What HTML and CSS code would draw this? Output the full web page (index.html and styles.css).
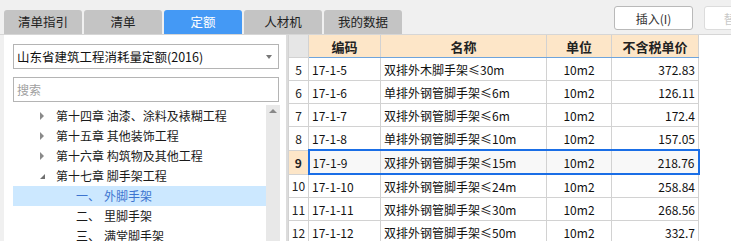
FILE: index.html
```html
<!DOCTYPE html>
<html>
<head>
  <title>定额</title>
  <link rel="stylesheet" href="styles.css">
</head>
<body>
  <div class="topbar">
    <div class="tabs">
      <div class="tab">清单指引</div>
      <div class="tab">清单</div>
      <div class="tab active">定额</div>
      <div class="tab">人材机</div>
      <div class="tab">我的数据</div>
    </div>
    <div class="actions">
      <button class="btn">插入(I)</button>
      <button class="btn disabled">替换(R)</button>
    </div>
  </div>

  <div class="main">
    <div class="left">
      <div class="select">
        <span>山东省建筑工程消耗量定额(2016)</span>
        <span class="caret"></span>
      </div>
      <div class="search">搜索</div>
      <div class="tree-wrap">
        <ul class="tree">
          <li class="node"><span class="arrow"></span>第十四章 油漆、涂料及裱糊工程</li>
          <li class="node"><span class="arrow"></span>第十五章 其他装饰工程</li>
          <li class="node"><span class="arrow"></span>第十六章 构筑物及其他工程</li>
          <li class="node"><span class="arrow open"></span>第十七章 脚手架工程</li>
          <li class="leaf selected"><span class="num">一、</span>外脚手架</li>
          <li class="leaf"><span class="num">二、</span>里脚手架</li>
          <li class="leaf"><span class="num">三、</span>满堂脚手架</li>
        </ul>
        <div class="scrollbar"><span class="up"></span></div>
      </div>
    </div>
    <div class="splitter"></div>
    <div class="right">
      <table class="grid">
        <colgroup>
          <col style="width:20px">
          <col style="width:72px">
          <col style="width:166px">
          <col style="width:65px">
          <col style="width:87px">
        </colgroup>
        <thead>
          <tr>
            <th class="corner"></th>
            <th>编码</th>
            <th>名称</th>
            <th>单位</th>
            <th>不含税单价</th>
          </tr>
        </thead>
        <tbody>
          <tr><td class="rn">5</td><td>17-1-5</td><td>双排外木脚手架≤30m</td><td class="c">10m2</td><td class="r">372.83</td></tr>
          <tr><td class="rn">6</td><td>17-1-6</td><td>单排外钢管脚手架≤6m</td><td class="c">10m2</td><td class="r">126.11</td></tr>
          <tr><td class="rn">7</td><td>17-1-7</td><td>双排外钢管脚手架≤6m</td><td class="c">10m2</td><td class="r">172.4</td></tr>
          <tr><td class="rn">8</td><td>17-1-8</td><td>单排外钢管脚手架≤10m</td><td class="c">10m2</td><td class="r">157.05</td></tr>
          <tr class="current"><td class="rn">9</td><td class="first">17-1-9</td><td>双排外钢管脚手架≤15m</td><td class="c">10m2</td><td class="r last">218.76</td></tr>
          <tr><td class="rn">10</td><td>17-1-10</td><td>双排外钢管脚手架≤24m</td><td class="c">10m2</td><td class="r">258.84</td></tr>
          <tr><td class="rn">11</td><td>17-1-11</td><td>双排外钢管脚手架≤30m</td><td class="c">10m2</td><td class="r">268.56</td></tr>
          <tr><td class="rn">12</td><td>17-1-12</td><td>双排外钢管脚手架≤50m</td><td class="c">10m2</td><td class="r">332.7</td></tr>
        </tbody>
      </table>
    </div>
  </div>
</body>
</html>
```

FILE: styles.css
```css
body, html {
  margin: 0;
  padding: 0;
  height: 100%;
  overflow: hidden;
  background-color: #f0f0f0;
  font-family: "Noto Sans CJK SC", "Liberation Sans", sans-serif;
  font-size: 12px;
  color: #1a1a1a;
}
.topbar {
  display: flex;
  height: 35px;
  border-bottom: 1px solid #d6d6d6;
  box-sizing: border-box;
  overflow: hidden;
}
.tabs {
  display: flex;
  align-self: flex-end;
  gap: 2px;
  padding-left: 4px;
}
.tab {
  width: 78px;
  height: 24px;
  line-height: 24px;
  text-align: center;
  font-size: 12.5px;
  background-color: #c4c4c4;
  color: #222;
  border-radius: 3px 3px 0 0;
}
.tab.active {
  background-color: #4499f5;
  color: #fff;
}
.actions {
  display: flex;
  gap: 11px;
  margin-left: 212px;
  margin-top: 6px;
}
.btn {
  flex-shrink: 0;
  width: 79px;
  height: 24px;
  padding: 0;
  font-family: inherit;
  font-size: 12px;
  color: #333;
  background-color: #fff;
  border: 1px solid #b9b9b9;
  border-radius: 3px;
}
.btn.disabled {
  color: #c8c8c8;
  border-color: #dcdcdc;
}
.main {
  display: flex;
  height: calc(100% - 35px);
}
.left {
  width: 282px;
  margin-left: 4px;
  background-color: #fff;
  padding-top: 9px;
  box-sizing: border-box;
}
.select, .search {
  margin-left: 9px;
  width: 266px;
  height: 25px;
  box-sizing: border-box;
  border: 1px solid #b4b4b4;
  display: flex;
  align-items: center;
  padding-left: 3px;
}
.select {
  justify-content: space-between;
  font-size: 12.5px;
  color: #111;
}
.caret {
  width: 0;
  height: 0;
  margin-right: 6px;
  border-left: 3px solid transparent;
  border-right: 3px solid transparent;
  border-top: 4px solid #777;
}
.search {
  margin-top: 8px;
  color: #a0a0a0;
}
.tree-wrap {
  display: flex;
  margin-top: 3px;
  margin-left: 9px;
}
.tree {
  list-style: none;
  margin: 0;
  padding: 1px 0 0 0;
  width: 253px;
}
.tree li {
  height: 20px;
  line-height: 20px;
  display: flex;
  align-items: center;
  white-space: nowrap;
}
.node {
  padding-left: 27px;
}
.arrow {
  width: 0;
  height: 0;
  margin-right: 12px;
  border-top: 4px solid transparent;
  border-bottom: 4px solid transparent;
  border-left: 4px solid #8a8a8a;
}
.arrow.open {
  border-top: 0;
  border-left: 5px solid transparent;
  border-bottom: 5px solid #707070;
  margin-right: 11px;
}
.leaf {
  padding-left: 63px;
}
.num {
  width: 28px;
}
.leaf.selected {
  background-color: #cce8ff;
  color: #3d74cf;
}
.scrollbar {
  width: 14px;
  height: 200px;
  background-color: #e8e8e8;
  display: flex;
  justify-content: center;
}
.up {
  margin-top: 4px;
  width: 0;
  height: 0;
  border-left: 4px solid transparent;
  border-right: 4px solid transparent;
  border-bottom: 4px solid #888;
}
.splitter {
  width: 2px;
  background-color: #dcdcdc;
}
.right {
  flex: 1;
  background-color: #fff;
}
.grid {
  border-collapse: collapse;
  table-layout: fixed;
  width: 410px;
  color: #111;
}
.grid th, .grid td {
  height: 22px;
  padding: 0 3px;
  border: 1px solid #d2d2d2;
  white-space: nowrap;
  overflow: hidden;
}
.grid th {
  background-color: #fde6c8;
  font-size: 13px;
  font-weight: bold;
  color: #222;
  border-top: 0;
  border-bottom: 1px solid #6ea4dc;
}
.grid th.corner {
  background-color: #e6e6e6;
  border-bottom-color: #d2d2d2;
}
.grid td.rn {
  padding: 0;
  text-align: center;
  color: #222;
}
.grid td.c {
  text-align: center;
}
.grid td.r {
  text-align: right;
}
.current td {
  background-color: #f8f8f8;
  border-top: 2px solid #1a6ee6;
  border-bottom: 2px solid #1a6ee6;
}
.current td.rn {
  background-color: #fde6c8;
  font-weight: bold;
  border-top: 1px solid #d2d2d2;
  border-bottom: 1px solid #d2d2d2;
}
.current td.first {
  border-left: 2px solid #1a6ee6;
}
.current td.last {
  border-right: 2px solid #1a6ee6;
}
```
